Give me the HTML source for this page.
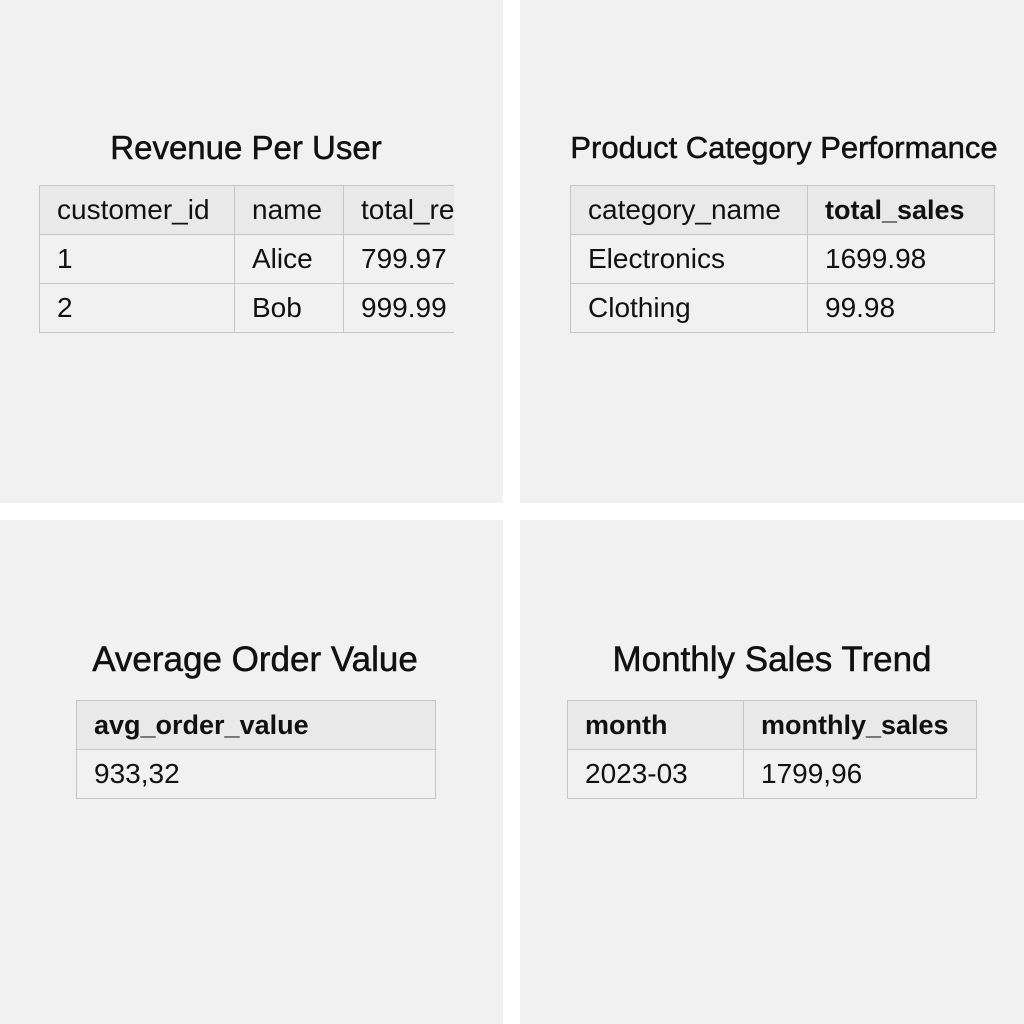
<!DOCTYPE html>
<html><head><style>
body{margin:0;width:1024px;height:1024px;background:#fff;position:relative;overflow:hidden;font-family:"Liberation Sans",sans-serif;color:#111}
.p{position:absolute;background:#f1f1f1}
.t{position:absolute;font-size:33px;white-space:nowrap;transform:translateX(-50%);-webkit-text-stroke:0.5px #111}
table{position:absolute;border-collapse:collapse;font-size:28px;table-layout:fixed}
td{border:1.5px solid #c6c6c6;padding:0 0 0 17px;height:48px;white-space:nowrap;overflow:hidden}
td.b{font-weight:bold;font-size:27px}
tr.h td{background:#e9e9e9}
.clip{position:absolute;overflow:hidden}
</style></head><body>
<div class="p" style="left:0;top:0;width:503px;height:503px"></div>
<div class="p" style="left:520px;top:0;width:504px;height:503px"></div>
<div class="p" style="left:0;top:520px;width:503px;height:504px"></div>
<div class="p" style="left:520px;top:520px;width:504px;height:504px"></div>

<div class="t" style="left:246px;top:129px">Revenue Per User</div>
<div class="clip" style="left:38px;top:184px;width:416px;height:152px">
<table style="left:1px;top:1px;width:500px">
<colgroup><col style="width:195px"><col style="width:109px"><col style="width:196px"></colgroup>
<tr class="h"><td>customer_id</td><td>name</td><td>total_revenue</td></tr>
<tr><td>1</td><td>Alice</td><td>799.97</td></tr>
<tr><td>2</td><td>Bob</td><td>999.99</td></tr>
</table></div>

<div class="t" style="left:784px;top:130px;font-size:31px">Product Category Performance</div>
<table style="left:570px;top:185px;width:424px">
<colgroup><col style="width:237px"><col style="width:187px"></colgroup>
<tr class="h"><td>category_name</td><td class="b">total_sales</td></tr>
<tr><td>Electronics</td><td>1699.98</td></tr>
<tr><td>Clothing</td><td>99.98</td></tr>
</table>

<div class="t" style="left:255px;top:640px;font-size:35px">Average Order Value</div>
<table style="left:76px;top:700px;width:360px">
<tr class="h"><td class="b">avg_order_value</td></tr>
<tr><td>933,32</td></tr>
</table>

<div class="t" style="left:772px;top:640px;font-size:35px">Monthly Sales Trend</div>
<table style="left:567px;top:700px;width:409px">
<colgroup><col style="width:176px"><col style="width:233px"></colgroup>
<tr class="h"><td class="b">month</td><td class="b">monthly_sales</td></tr>
<tr><td>2023-03</td><td>1799,96</td></tr>
</table>
</body></html>
